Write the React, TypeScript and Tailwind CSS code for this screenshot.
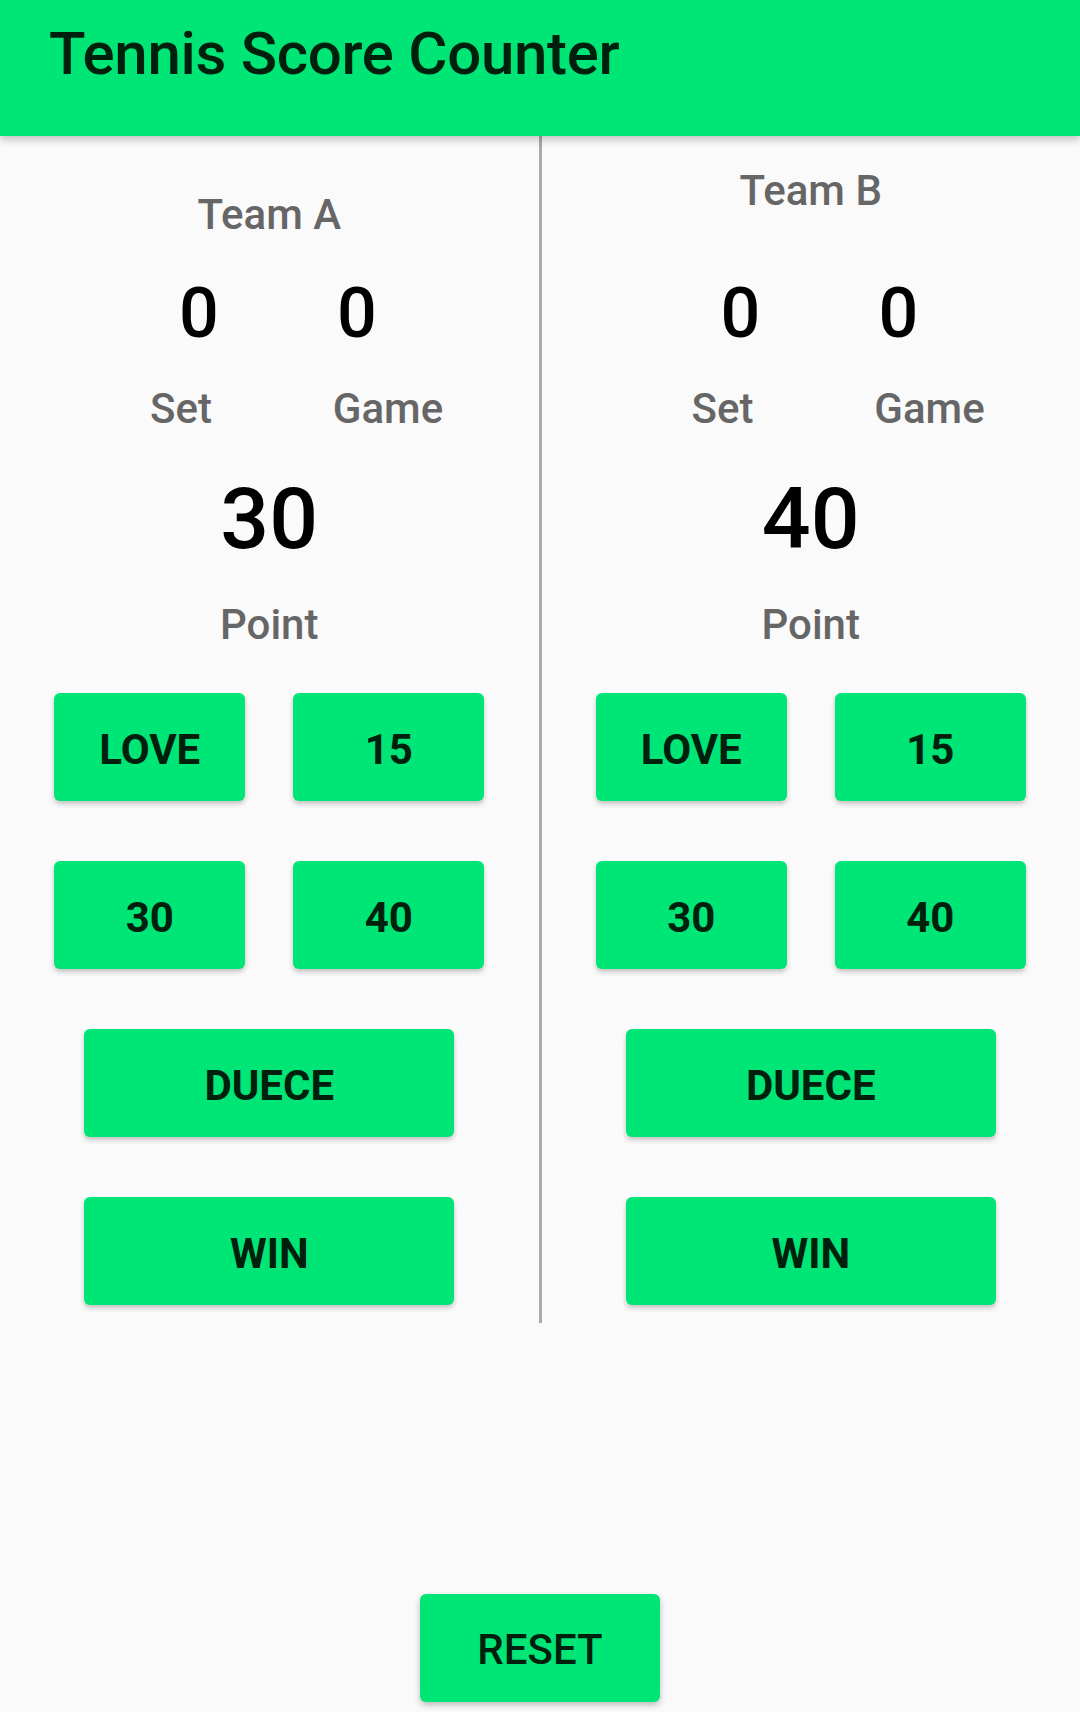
import React, { useState } from 'react';

const BTN =
  "flex items-center justify-center rounded-[6px] bg-[#00e676] pt-[5px] text-[#00200e] text-[42px] leading-[42px] font-bold shadow-[0_3px_5px_rgba(0,0,0,0.22)]";

type TeamProps = {
  name: string;
  set: number;
  game: number;
  point: string;
  topPad: string;
  numbersGap: string;
  onPoint: (p: string) => void;
};

function TeamColumn({ name, set, game, point, topPad, numbersGap, onPoint }: TeamProps) {
  return (
    <div className={`flex flex-1 flex-col items-stretch ${topPad}`}>
      <p className="text-center text-[42px] leading-[42px] font-medium text-[#666666]">{name}</p>

      <div className={`flex pl-[149px] gap-[58px] ${numbersGap}`}>
        <span className="w-[100px] text-center text-[70px] leading-[70px] font-medium text-black">{set}</span>
        <span className="w-[100px] text-center text-[70px] leading-[70px] font-medium text-black">{game}</span>
      </div>

      <div className="mt-[40px] flex pl-[121px] gap-[87px]">
        <span className="w-[120px] text-center text-[42px] leading-[42px] font-medium text-[#666666]">Set</span>
        <span className="w-[120px] text-center text-[42px] leading-[42px] font-medium text-[#666666]">Game</span>
      </div>

      <p className="mt-[46px] text-center text-[86px] leading-[86px] font-medium text-black">{point}</p>
      <p className="mt-[42px] text-center text-[42px] leading-[42px] font-medium text-[#666666]">Point</p>

      <div className="mt-[47px] flex flex-col items-center gap-[60px]">
        <div className="grid grid-cols-2 gap-x-[48px] gap-y-[60px]">
          {['LOVE', '15', '30', '40'].map((label) => (
            <button
              key={label}
              onClick={() => onPoint(label === 'LOVE' ? '0' : label)}
              className={`${BTN} h-[108px] w-[191px]`}
            >
              {label}
            </button>
          ))}
        </div>
        <button onClick={() => onPoint('AD')} className={`${BTN} h-[108px] w-[370px]`}>
          DUECE
        </button>
        <button onClick={() => onPoint('0')} className={`${BTN} h-[108px] w-[370px]`}>
          WIN
        </button>
      </div>
    </div>
  );
}

export default function App() {
  const [pointA, setPointA] = useState('30');
  const [pointB, setPointB] = useState('40');

  const reset = () => {
    setPointA('0');
    setPointB('0');
  };

  return (
    <div className="flex min-h-[1712px] w-[1080px] flex-col bg-[#fafafa] font-['Roboto',sans-serif]">
      <header className="relative z-10 h-[136px] bg-[#00e676] pl-[49px] pt-[24px] shadow-[0_4px_8px_rgba(0,0,0,0.22)]">
        <h1 className="text-[60px] leading-[60px] font-medium tracking-[-0.3px] text-[#00200e]">Tennis Score Counter</h1>
      </header>

      <div className="flex h-[1187px]">
        <TeamColumn
          name="Team A"
          set={0}
          game={0}
          point={pointA}
          topPad="pt-[58px]"
          numbersGap="mt-[42px]"
          onPoint={setPointA}
        />
        <div className="w-[3px] bg-[#aaaaaa]" />
        <TeamColumn
          name="Team B"
          set={0}
          game={0}
          point={pointB}
          topPad="pt-[34px]"
          numbersGap="mt-[66px]"
          onPoint={setPointB}
        />
      </div>

      <div className="mt-auto flex justify-center pb-[10px]">
        <button
          onClick={reset}
          className="flex h-[108px] w-[240px] items-center justify-center rounded-[6px] bg-[#00e676] pt-[4px] text-[42px] leading-[42px] font-medium text-[#00200e] shadow-[0_3px_6px_rgba(0,0,0,0.25)]"
        >
          RESET
        </button>
      </div>
    </div>
  );
}
